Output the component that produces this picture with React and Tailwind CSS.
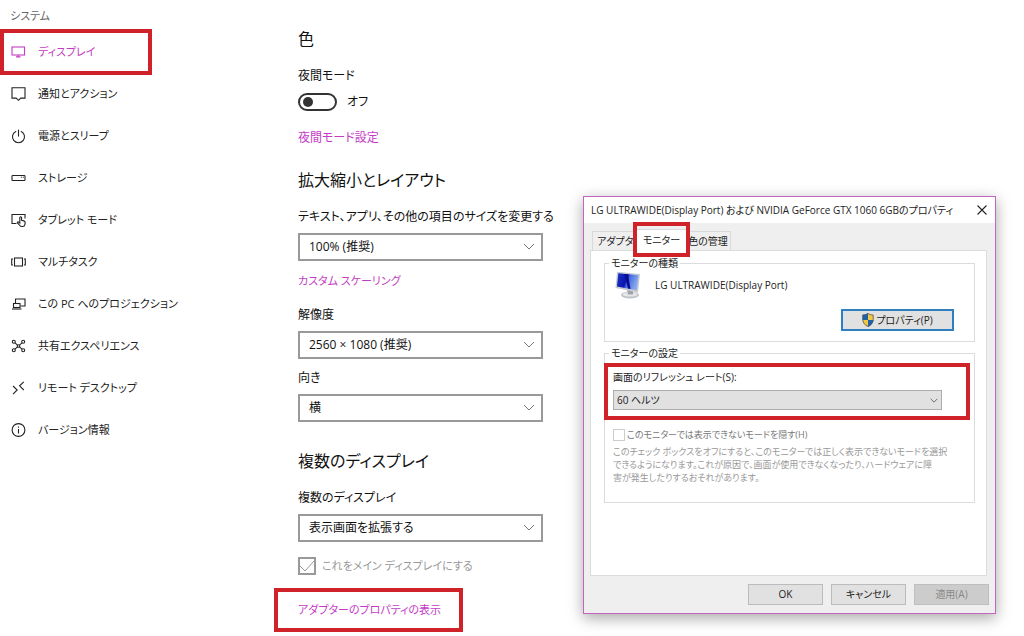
import { useState } from "react";

const navItems = [
  { label: "ディスプレイ", icon: "display" },
  { label: "通知とアクション", icon: "notice" },
  { label: "電源とスリープ", icon: "power" },
  { label: "ストレージ", icon: "storage" },
  { label: "タブレット モード", icon: "tablet" },
  { label: "マルチタスク", icon: "multitask" },
  { label: "この PC へのプロジェクション", icon: "project" },
  { label: "共有エクスペリエンス", icon: "shared" },
  { label: "リモート デスクトップ", icon: "remote" },
  { label: "バージョン情報", icon: "info" },
];

const iconShapes = {
  display: (
    <>
      <rect x="1" y="2" width="12.5" height="8" />
      <path d="M7.2 10v1.7M5 11.9h4.5" />
    </>
  ),
  notice: <path d="M1 .8h13v10.3H9.8L7.5 13.3l-2.3-2.2H1z" />,
  power: (
    <>
      <path d="M5.2 2.2a6 6 0 1 0 4.6 0" />
      <path d="M7.5.6v7" />
    </>
  ),
  storage: (
    <>
      <rect x="1" y="4.5" width="13" height="5" rx="0.8" />
      <path d="M9.8 6.300h1M11.800 6.300h1" />
    </>
  ),
  tablet: (
    <>
      <path d="M5.5 10.500H1V1.500h13v4" />
      <path d="M8.800 10V4.700c0-1.300 1.800-1.300 1.800 0v2.600l2.300.6c1 .3 1.400.8 1.300 1.800l-.4 2.200c-.2 1.100-.8 1.600-1.900 1.600h-1.200c-.9 0-1.400-.3-1.900-1L6.500 9.900c-.5-.9.5-1.500 1.200-.8z" />
    </>
  ),
  multitask: (
    <>
      <rect x="3.500" y="3" width="8" height="8" />
      <path d="M2 4H.7v6H2M13 4h1.300v6H13" />
    </>
  ),
  project: (
    <>
      <path d="M4.500 6V2H14v7H9.500" />
      <rect x="2.500" y="6.500" width="6.500" height="4" />
      <path d="M1 12h9.500" />
    </>
  ),
  shared: (
    <>
      <circle cx="2.800" cy="2.800" r="1.500" />
      <circle cx="12.200" cy="2.800" r="1.500" />
      <circle cx="2.800" cy="11.200" r="1.500" />
      <circle cx="12.200" cy="11.200" r="1.500" />
      <circle cx="7.500" cy="7" r="1.300" />
      <path d="M4 3.900l2.500 2.200M11 3.900L8.500 6.100M4 10.100l2.500-2.200M11 10.100L8.500 7.900" />
    </>
  ),
  remote: <path d="M2 5l4.200 4L2 13.200M12.800.8l-4.200 4 4.200 4.200" />,
  info: (
    <>
      <circle cx="7.500" cy="7" r="6.400" />
      <path d="M7.500 6v4.500M7.500 3.500v1.200" />
    </>
  ),
};

const NavIcon = ({ name }) => (
  <svg
    className="h-[15px] w-[15px] shrink-0"
    viewBox="0 0 15 15"
    fill="none"
    stroke="currentColor"
    strokeWidth="1.1"
    aria-hidden="true"
  >
    {iconShapes[name]}
  </svg>
);

const Chevron = ({ className }) => (
  <svg className={className} viewBox="0 0 12 7" fill="none" stroke="currentColor" aria-hidden="true">
    <path d="M1 1l5 5 5-5" />
  </svg>
);

/* Red marker frame laid over a part of the screen */
const Marker = ({ className }) => (
  <span className={`pointer-events-none absolute border-4 border-[#cf2229] ${className}`} />
);

const SettingSelect = ({ id, label, value }) => (
  <>
    <label htmlFor={id} className="block whitespace-nowrap">
      {label}
    </label>
    <div className="relative mt-1.5">
      <select
        id={id}
        className="block h-7 w-full appearance-none border-2 border-[#999] bg-white pl-[9px] pr-8"
      >
        <option>{value}</option>
      </select>
      <Chevron className="pointer-events-none absolute right-2 top-2.5 h-[7px] w-3 text-[#777]" />
    </div>
  </>
);

const Sidebar = () => (
  <nav className="w-[298px] shrink-0 pt-1.5 text-[11px]/5">
    <h1 className="mb-[5px] pl-2.5 text-[#666]">システム</h1>
    <ul>
      {navItems.map((item, i) => (
        <li key={item.icon} className="relative">
          <a
            href="#"
            className={`flex h-[42px] items-center gap-3 pl-[11px] ${i === 0 ? "text-[#c43cc4]" : "text-[#222]"}`}
          >
            <NavIcon name={item.icon} />
            {item.label}
          </a>
          {i === 0 && <Marker className="-inset-y-0.5 left-0 w-[152px]" />}
        </li>
      ))}
    </ul>
  </nav>
);

const Settings = () => {
  const [night, setNight] = useState(false);
  return (
    <main className="w-[245px] shrink-0 pt-[25px] text-[#111]">
      {/* Colour */}
      <h2 className="mb-[13px] text-base/7">色</h2>
      <p id="night">夜間モード</p>
      <div className="mt-1.5 flex h-5 items-center gap-2.5">
        <button
          role="switch"
          aria-checked={night}
          aria-labelledby="night"
          onClick={() => setNight(!night)}
          className={`flex h-[18px] w-[39px] items-center rounded-full border-2 border-[#333] px-[3px] ${night ? "justify-end" : ""}`}
        >
          <span className="h-2.5 w-2.5 rounded-full bg-[#333]" />
        </button>
        <span>{night ? "オン" : "オフ"}</span>
      </div>
      <a href="#" className="mt-4 block text-[#c43cc4]">
        夜間モード設定
      </a>

      {/* Scale and layout */}
      <h2 className="mb-[13px] mt-[18px] text-base/7">拡大縮小とレイアウト</h2>
      <SettingSelect id="scale" label="テキスト、アプリ、その他の項目のサイズを変更する" value="100% (推奨)" />
      <a href="#" className="mb-3.5 mt-2.5 block text-[11px]/5 text-[#c43cc4]">
        カスタム スケーリング
      </a>
      <SettingSelect id="resolution" label="解像度" value="2560 × 1080 (推奨)" />
      <div className="h-[9px]" />
      <SettingSelect id="orientation" label="向き" value="横" />

      {/* Multiple displays */}
      <h2 className="mb-[13px] mt-[25px] text-base/7">複数のディスプレイ</h2>
      <SettingSelect id="multi" label="複数のディスプレイ" value="表示画面を拡張する" />
      <label className="mt-3.5 flex h-5 items-center gap-1.5 text-[11px]/5 text-[#999]">
        <span className="relative h-[18px] w-[18px]">
          <input
            type="checkbox"
            defaultChecked
            disabled
            className="peer block h-[18px] w-[18px] appearance-none border-2 border-[#999]"
          />
          <svg
            className="pointer-events-none absolute inset-0 hidden peer-checked:block"
            viewBox="0 0 18 18"
            fill="none"
            stroke="currentColor"
            aria-hidden="true"
          >
            <path d="M2 9l5 5 9-10" />
          </svg>
        </span>
        これをメイン ディスプレイにする
      </label>
      <div className="relative mt-6 text-[11px]/5">
        <a href="#" className="block text-[#c43cc4]">
          アダプターのプロパティの表示
        </a>
        <Marker className="-inset-y-3 -left-6 w-[189px]" />
      </div>
    </main>
  );
};

const MonitorIcon = () => (
  <svg className="h-7 w-[26px]" viewBox="0 0 26 28" aria-hidden="true">
    <defs>
      <linearGradient id="screen" x1="0" y1="0" x2="1" y2="0.3">
        <stop offset="0" stopColor="#1c35c4" />
        <stop offset="0.5" stopColor="#0a14b0" />
        <stop offset="0.6" stopColor="#4468e0" />
        <stop offset="1" stopColor="#86a8f0" />
      </linearGradient>
    </defs>
    <ellipse cx="15" cy="24" rx="9" ry="3.400" fill="#bfc3c7" />
    <ellipse cx="15" cy="23.300" rx="7.500" ry="2.300" fill="#e4e6e8" />
    <path d="M12 18l6 1.500v4h-5z" fill="#a0a4a9" />
    <path d="M2 .8L25 3l-2 18.500L.5 17z" fill="#c6cbd1" />
    <path d="M3.300 2.200L23.500 4.200 21.800 19.200 2 15.500z" fill="url(#screen)" />
    <path d="M9.500 2.900l3.500.3 2.500 14.700-2.500-.5z" fill="#060d90" />
  </svg>
);

const ShieldIcon = () => (
  <svg className="h-3.5 w-3" viewBox="0 0 12 14" aria-hidden="true">
    <path d="M6 0C4.500 1.200 2.500 1.800.5 1.800V7H6z" fill="#1d63a5" />
    <path d="M6 0c1.500 1.200 3.500 1.800 5.500 1.800V7H6z" fill="#f2c744" />
    <path d="M.5 7c.3 3.200 2.500 5.600 5.500 7V7z" fill="#f2c744" />
    <path d="M11.500 7c-.3 3.200-2.500 5.600-5.500 7V7z" fill="#1d63a5" />
    <path
      d="M6 .5C4.500 1.500 2.500 2 .8 2v4.500c0 3.300 2.200 5.700 5.200 7 3-1.300 5.200-3.700 5.200-7V2C9.500 2 7.500 1.500 6 .5z"
      fill="none"
      stroke="#4c5563"
      strokeWidth="0.8"
    />
  </svg>
);

const PropertiesDialog = () => (
  <section
    role="dialog"
    aria-labelledby="dialog-title"
    className="mb-[23px] ml-10 mr-7 mt-[196px] min-w-0 flex-1 self-start border border-[#c264c0] bg-[#efefef] text-[10px]/[13px] text-[#222] shadow-[0_4px_14px_rgba(0,0,0,0.35)]"
  >
    {/* Title bar */}
    <header className="flex h-[26px] items-center justify-between bg-white pl-[7px] pr-2">
      <h2 id="dialog-title" className="whitespace-nowrap">
        LG ULTRAWIDE(Display Port) および NVIDIA GeForce GTX 1060 6GBのプロパティ
      </h2>
      <button aria-label="閉じる">
        <svg className="h-2.5 w-2.5" viewBox="0 0 10 10" stroke="#222" strokeWidth="1.1" aria-hidden="true">
          <path d="M.5.5l9 9M9.500.5l-9 9" />
        </svg>
      </button>
    </header>

    {/* Tabs */}
    <div role="tablist" className="flex items-end pl-2 pt-1.5">
      <button role="tab" aria-selected="false" className="h-[19px] w-[46px] whitespace-nowrap border border-b-0 border-[#d9d9d9] pl-1 text-left">
        アダプター
      </button>
      <div className="relative z-10 -mx-[3px] -mb-px">
        <button role="tab" aria-selected="true" className="block h-[22px] w-[53px] border border-b-0 border-[#d9d9d9] bg-white">
          モニター
        </button>
        <Marker className="-bottom-1.5 -left-0.5 -right-0.5 -top-[7px]" />
      </div>
      <button role="tab" aria-selected="false" className="h-[19px] w-[46px] whitespace-nowrap border border-b-0 border-[#d9d9d9]">
        色の管理
      </button>
    </div>

    {/* Monitor tab */}
    <div role="tabpanel" className="ml-1.5 mr-2 border border-[#dcdcdc] bg-white pb-[72px] pl-[13px] pr-[11px] pt-1">
      <fieldset className="min-w-0 border border-[#dcdcdc]">
        <legend className="ml-1 px-0.5 leading-4">モニターの種類</legend>
        <div className="flex items-center gap-3.5 pl-2.5">
          <MonitorIcon />
          <p>LG ULTRAWIDE(Display Port)</p>
        </div>
        <div className="flex justify-end pb-2.5 pr-5 pt-2.5">
          <button className="flex h-[22px] w-[113px] items-center justify-center gap-0.5 border-2 border-[#2d7fc1] bg-[#e1e1e1]">
            <ShieldIcon />
            プロパティ(P)
          </button>
        </div>
      </fieldset>

      <fieldset className="mt-[3px] min-w-0 border border-[#dcdcdc] pb-[18px]">
        <legend className="ml-1 px-0.5 leading-4">モニターの設定</legend>
        <div className="relative pb-[18px] pl-2 pr-8 pt-2.5">
          <label htmlFor="rate" className="block">
            画面のリフレッシュ レート(S):
          </label>
          <div className="relative mt-1.5">
            <select id="rate" className="block h-5 w-full appearance-none border border-[#adadad] bg-[#e1e1e1] pl-[3px]">
              <option>60 ヘルツ</option>
            </select>
            <Chevron className="pointer-events-none absolute right-1 top-2 h-[5px] w-2 text-[#333]" />
          </div>
          <Marker className="-left-px bottom-2 right-1 top-0.5" />
        </div>
        <label className="flex items-center gap-0.5 pl-2 text-[9px]/[13px] text-[#777]">
          <input type="checkbox" disabled className="h-3 w-3 appearance-none border border-[#ccc] bg-white" />
          このモニターでは表示できないモードを隠す(H)
        </label>
        <p className="mt-1 whitespace-nowrap pl-2 text-[9px]/[13px] text-[#999]">
          このチェック ボックスをオフにすると、このモニターでは正しく表示できないモードを選択
          <br />
          できるようになります。これが原因で、画面が使用できなくなったり、ハードウェアに障
          <br />
          害が発生したりするおそれがあります。
        </p>
      </fieldset>
    </div>

    {/* Buttons */}
    <footer className="flex justify-end gap-2 pb-2 pr-1.5 pt-2">
      <button className="h-[21px] w-[75px] border border-[#bbb] bg-[#e1e1e1]">OK</button>
      <button className="h-[21px] w-[75px] border border-[#bbb] bg-[#e1e1e1]">キャンセル</button>
      <button disabled className="h-[21px] w-[75px] border border-[#bfbfbf] bg-[#ccc] text-[#888]">
        適用(A)
      </button>
    </footer>
  </section>
);

const App = () => {
  return (
    <div className="flex bg-white font-['Open_Sans','Noto_Sans_CJK_JP',sans-serif] text-xs/5 [font-feature-settings:'palt']">
      <Sidebar />
      <Settings />
      <PropertiesDialog />
    </div>
  );
};

export default App;
